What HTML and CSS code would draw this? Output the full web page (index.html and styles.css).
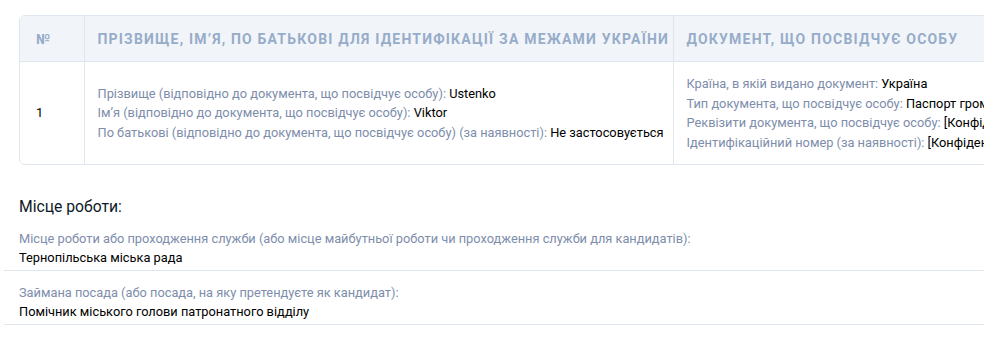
FILE: index.html
```html
<!DOCTYPE html>
<html lang="uk">
<head>
<meta charset="utf-8">
<title>Декларація</title>
<link rel="stylesheet" href="styles.css">
</head>
<body>
<div class="page">
  <div class="table-wrap">
    <table class="decl-table">
      <colgroup>
        <col class="c-num">
        <col class="c-name">
        <col class="c-doc">
      </colgroup>
      <thead>
        <tr>
          <th>№</th>
          <th>Прізвище, ім’я, по батькові для ідентифікації за межами України</th>
          <th>Документ, що посвідчує особу</th>
        </tr>
      </thead>
      <tbody>
        <tr>
          <td class="col-num">1</td>
          <td class="col-name">
            <div><span class="lbl">Прізвище (відповідно до документа, що посвідчує особу):</span> Ustenko</div>
            <div><span class="lbl">Ім’я (відповідно до документа, що посвідчує особу):</span> Viktor</div>
            <div><span class="lbl">По батькові (відповідно до документа, що посвідчує особу) (за наявності):</span> Не застосовується</div>
          </td>
          <td class="col-doc">
            <div><span class="lbl">Країна, в якій видано документ:</span> Україна</div>
            <div><span class="lbl">Тип документа, що посвідчує особу:</span> Паспорт громадянина України</div>
            <div><span class="lbl">Реквізити документа, що посвідчує особу:</span> [Конфіденційна інформація]</div>
            <div><span class="lbl">Ідентифікаційний номер (за наявності):</span> [Конфіденційна інформація]</div>
          </td>
        </tr>
      </tbody>
    </table>
  </div>

  <h3 class="section-title">Місце роботи:</h3>
  <div class="field">
    <div class="field-label">Місце роботи або проходження служби (або місце майбутньої роботи чи проходження служби для кандидатів):</div>
    <div class="field-value">Тернопільська міська рада</div>
  </div>
  <div class="field">
    <div class="field-label">Займана посада (або посада, на яку претендуєте як кандидат):</div>
    <div class="field-value">Помічник міського голови патронатного відділу</div>
  </div>
</div>
</body>
</html>
```

FILE: styles.css
```css
html, body {
  margin: 0;
  padding: 0;
  background: #fff;
  overflow: hidden;
}
body {
  font-family: Roboto, "Liberation Sans", Arial, sans-serif;
  font-size: 12.8px;
  color: #0e1726;
}
.page {
  padding: 15px 0 0 4px;
  width: 1300px;
}
.table-wrap {
  margin-left: 15px;
  border: 1px solid #e0e6ed;
  border-radius: 6px;
  overflow: hidden;
  width: 1200px;
}
.decl-table {
  border-collapse: collapse;
  table-layout: fixed;
  width: 100%;
}
.c-num { width: 64px; }
.c-name { width: 589px; }
.decl-table th {
  background: #f1f5f9;
  color: #97acc9;
  font-weight: 700;
  font-size: 14px;
  text-transform: uppercase;
  letter-spacing: 1.2px;
  text-align: left;
  height: 45px;
  padding: 0 0 0 13px;
  border-bottom: 1px solid #e0e6ed;
  white-space: nowrap;
  overflow: hidden;
}
.decl-table th:first-child {
  padding-left: 16px;
}
.decl-table td {
  padding: 0 0 0 13px;
  height: 102px;
  line-height: 19.5px;
  vertical-align: middle;
  color: #000;
  white-space: nowrap;
}
.decl-table th + th,
.decl-table td + td {
  border-left: 1px solid #e0e6ed;
}
.decl-table td.col-num {
  padding-left: 16px;
}
.decl-table td.col-name {
  padding-top: 0;
}
.lbl {
  color: #7d8dab;
}
.section-title {
  margin: 32px 0 0 15px;
  font-size: 15.7px;
  font-weight: 400;
  color: #0e1726;
  line-height: 20px;
}
.field {
  padding: 12px 0 3px 15px;
  border-bottom: 1px solid #e0e6ed;
  line-height: 19px;
}
.field-label {
  color: #7d8dab;
}
.field-value {
  color: #000;
}
```
